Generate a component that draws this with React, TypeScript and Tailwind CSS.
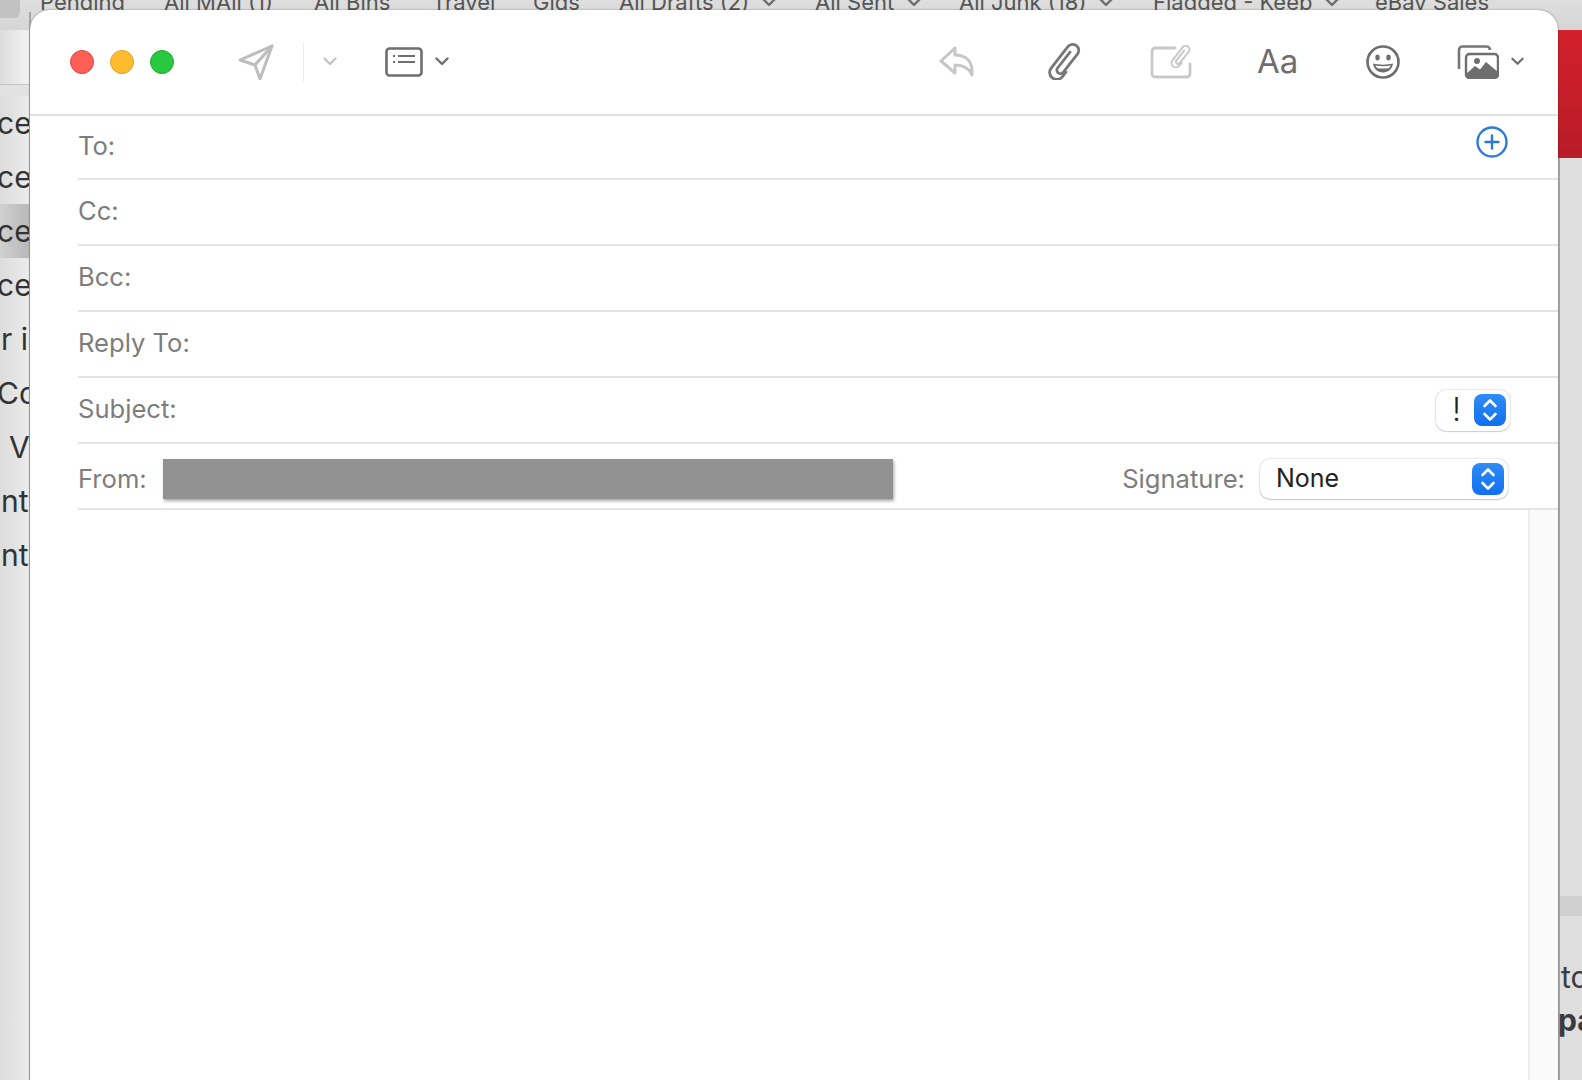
const sans = "font-['Inter','Liberation_Sans',sans-serif]";

const clipPath = "M-1.5 -10V10a3.5 3.5 0 0 0 7 0V-13a6 6 0 0 0-12 0V14a7 7 0 0 0 14 0V8";

function Chevron({ className, color = "#6e6e6e" }: { className?: string; color?: string }) {
  return (
    <svg viewBox="0 0 14 9" className={className} fill="none" stroke={color} strokeWidth="2.4" strokeLinecap="round" strokeLinejoin="round">
      <path d="M1.5 1.5 7 7l5.5-5.5" />
    </svg>
  );
}

function Stepper({ className }: { className: string }) {
  return (
    <div className={`flex items-center justify-center rounded-[8px] bg-gradient-to-b from-[#2f8cf8] to-[#0f6fee] ${className}`}>
      <svg viewBox="0 0 16 26" className="h-[26px] w-[16px]" fill="none" stroke="#fff" strokeWidth="2.6" strokeLinecap="round" strokeLinejoin="round">
        <path d="M2.5 9 8 3.5 13.5 9" />
        <path d="M2.5 17 8 22.500 13.500 17" />
      </svg>
    </div>
  );
}

function HeaderRow({ label, height = "h-[66px]", children }: { label: string; height?: string; children?: React.ReactNode }) {
  return (
    <div className={`flex shrink-0 items-center justify-between border-b-2 border-[#e4e4e4] pb-[2px] ${height}`}>
      <span className="text-[25.6px] text-[#7d7d7d]">{label}</span>
      {children}
    </div>
  );
}

const tabs = [
  { label: "Pending", width: "w-[124px]" },
  { label: "All MAil (1)", width: "w-[150px]" },
  { label: "All Bins", width: "w-[118px]" },
  { label: "Travel", width: "w-[101px]" },
  { label: "Gids", width: "w-[86px]" },
  { label: "All Drafts (2)", width: "w-[196px]", chevron: true },
  { label: "All Sent", width: "w-[144px]", chevron: true },
  { label: "All Junk (18)", width: "w-[194px]", chevron: true },
  { label: "Flagged - Keeb", width: "w-[222px]", chevron: true },
  { label: "eBay Sales", width: "w-[130px]" },
];

const sidebarRows = [
  { text: "cel", className: "-ml-[3px]" },
  { text: "cel", className: "-ml-[3px]" },
  { text: "cel", className: "-ml-[3px]", selected: true },
  { text: "cel", className: "-ml-[3px]" },
  { text: "r is", className: "ml-[1px]" },
  { text: "Co", className: "-ml-[3px]" },
  { text: "V", className: "ml-[9px]" },
  { text: "nte", className: "ml-[1px]" },
  { text: "nte", className: "ml-[1px]" },
];

export default function App() {
  return (
    <div className={`relative h-[1080px] w-[1582px] overflow-hidden bg-[#e2e2e2] ${sans}`}>
      {/* mail window behind the compose sheet */}
      <div className="absolute left-0 top-0 h-[30px] w-full bg-gradient-to-b from-[#dedede] to-[#d6d6d6]" />
      <div className="absolute left-0 top-0 h-[18px] w-[20px] rounded-br-[6px] bg-[#c2c2c2]" />
      <div className="absolute left-[40px] top-[-13px] flex h-[30px] items-center text-[22px] text-[#555]">
        {tabs.map((t) => (
          <div key={t.label} className={`flex items-center gap-[13px] ${t.width}`}>
            <span className="whitespace-nowrap">{t.label}</span>
            {t.chevron && <Chevron className="h-[9px] w-[14px]" />}
          </div>
        ))}
      </div>

      <div className="absolute left-0 top-[30px] h-[55px] w-[30px] border-b border-[#c4c4c4] bg-gradient-to-r from-[#dcdcdc] to-[#f4f4f4]" />
      <div className="absolute left-0 top-[96px] flex w-[30px] flex-col overflow-hidden bg-gradient-to-r from-[#dcdcdc] to-[#ececec] text-[30px] text-[#333]">
        {sidebarRows.map((r, i) => (
          <div key={i} className={`flex h-[54px] items-center whitespace-nowrap ${r.selected ? "bg-gradient-to-r from-[#cfcfcf] to-[#b8b8b8]" : ""}`}>
            <span className={r.className}>{r.text}</span>
          </div>
        ))}
      </div>
      <div className="absolute left-0 top-[582px] h-[498px] w-[30px] bg-gradient-to-r from-[#dcdcdc] to-[#ececec]" />
      <div className="absolute left-[29px] top-[12px] h-[1068px] w-[2px] bg-[#a8a8a8]" />

      <div className="absolute left-[1558px] top-[30px] h-[128px] w-[24px] bg-gradient-to-b from-[#d2202c] to-[#b81c28]" />
      <div className="absolute left-[1558px] top-[158px] h-[922px] w-[24px] border-l-2 border-[#a8a8a8] bg-[#dedede]" />
      <div className="absolute left-[1558px] top-[896px] h-[20px] w-[24px] border-l-2 border-[#a8a8a8] bg-[#cfcfcf]" />
      <div className="absolute left-[1558px] top-[956px] w-[24px] overflow-hidden text-[30px] leading-[43px] text-[#3a3a40]">
        <div className="ml-[3px] whitespace-nowrap">to</div>
        <div className="whitespace-nowrap font-bold">pa</div>
      </div>

      {/* compose window */}
      <div className="absolute left-[30px] top-[10px] flex h-[1090px] w-[1528px] flex-col rounded-t-[20px] bg-white shadow-[0_0_2px_rgba(0,0,0,0.45)]">
        {/* toolbar */}
        <div className="flex h-[106px] shrink-0 items-center border-b-2 border-[#e0e0e0] pb-[1px] pl-[40px]">
          <div className="h-[24px] w-[24px] rounded-full border border-[#e0443e] bg-[#ff5f57]" />
          <div className="ml-[16px] h-[24px] w-[24px] rounded-full border border-[#dea123] bg-[#febc2e]" />
          <div className="ml-[16px] h-[24px] w-[24px] rounded-full border border-[#1fa92e] bg-[#28c840]" />

          <svg viewBox="0 0 36 36" className="ml-[64px] h-[36px] w-[36px]" fill="none" stroke="#bdbdbd" strokeWidth="3" strokeLinejoin="round" strokeLinecap="round">
            <path d="M34 2 2 16l15 5 5 14z" />
            <path d="M34 2 17 21" />
          </svg>
          <div className="ml-[29px] h-[40px] w-[1px] bg-[#ececec]" />
          <Chevron className="ml-[19px] h-[9px] w-[14px]" color="#c4c4c4" />
          <svg viewBox="0 0 38 30" className="ml-[48px] h-[30px] w-[38px]" fill="none" stroke="#6e6e6e">
            <rect x="1.500" y="1.500" width="35" height="27" rx="3" strokeWidth="2.600" />
            <path d="M8 9h2M8 15h2M13 9h17M13 15h17" strokeWidth="2" />
          </svg>
          <Chevron className="ml-[12px] h-[9px] w-[14px]" />

          {/* reply */}
          <svg viewBox="0 0 38 34" className="ml-[489px] h-[34px] w-[38px]" fill="none" stroke="#c6c6c6" strokeWidth="3" strokeLinejoin="round" strokeLinecap="round">
            <path d="M17 3 3 16l14 12v-8c8 0 14 3 17 10 1-13-5-20-17-20z" />
          </svg>
          {/* attach */}
          <svg viewBox="-20 -20 40 40" className="ml-[70px] mb-[2px] h-[38px] w-[38px]" fill="none" stroke="#777" strokeWidth="2.800" strokeLinecap="round" strokeLinejoin="round">
            <g transform="rotate(38) scale(1.06)">
              <path d={clipPath} />
            </g>
          </svg>
          {/* compose with attachment */}
          <svg viewBox="0 0 42 34" className="ml-[66px] h-[34px] w-[42px]" fill="none" stroke="#c8c8c8" strokeLinecap="round" strokeLinejoin="round">
            <path d="M25 3H5a3 3 0 0 0-3 3v23a3 3 0 0 0 3 3h32a3 3 0 0 0 3-3V19" strokeWidth="2.800" />
            <g transform="translate(31 11) rotate(38) scale(0.62)">
              <path d={clipPath} strokeWidth="3.200" />
            </g>
          </svg>
          <span className="ml-[65px] w-[42px] text-[33px] leading-none text-[#6e6e6e]">Aa</span>
          {/* emoji */}
          <svg viewBox="0 0 34 34" className="ml-[67px] h-[34px] w-[34px]" fill="none">
            <circle cx="17" cy="17" r="15.500" stroke="#6e6e6e" strokeWidth="2.600" />
            <ellipse cx="11.500" cy="12.500" rx="2.200" ry="3" fill="#6e6e6e" />
            <ellipse cx="22.500" cy="12.500" rx="2.200" ry="3" fill="#6e6e6e" />
            <path d="M7 18.500c6 1.500 14 1.500 20 0-.5 5-4.500 9-10 9s-9.500-4-10-9z" fill="#6e6e6e" />
            <path d="M9.500 20.500c5 1 10 1 15 0-.5 1.500-1 2-1.500 2.500-4 .7-8 .7-12 0-.5-.5-1-1-1.500-2.500z" fill="#fff" />
          </svg>
          {/* photos */}
          <svg viewBox="0 0 42 34" className="ml-[57px] h-[34px] w-[42px]" fill="none">
            <path d="M2 24V5a3.500 3.500 0 0 1 3.500-3.500h24A3.500 3.500 0 0 1 33 5" stroke="#777" strokeWidth="2.600" />
            <rect x="9" y="9" width="32" height="24" rx="3.500" fill="#fff" stroke="#6e6e6e" strokeWidth="2.400" />
            <circle cx="20" cy="16" r="3" fill="#6e6e6e" />
            <path d="M9 29l9-8 5 3.500 6-7.500 12 10v3a3.500 3.500 0 0 1-3.500 3.500h-25A3.500 3.500 0 0 1 9 30z" fill="#6e6e6e" />
          </svg>
          <Chevron className="ml-[12px] h-[9px] w-[13px]" />
        </div>

        {/* address fields */}
        <div className="flex shrink-0 flex-col pl-[48px]">
          <HeaderRow label="To:" height="h-[64px]">
            <svg viewBox="0 0 32 32" className="mb-[8px] mr-[50px] h-[32px] w-[32px]" fill="none" stroke="#2a79d8" strokeWidth="2.400" strokeLinecap="round">
              <circle cx="16" cy="16" r="14.500" />
              <path d="M16 9.500v13M9.500 16h13" />
            </svg>
          </HeaderRow>
          <HeaderRow label="Cc:" />
          <HeaderRow label="Bcc:" />
          <HeaderRow label="Reply To:" />
          <HeaderRow label="Subject:">
            <div className="mr-[48px] mt-[2px] flex h-[41px] w-[74px] items-center justify-between rounded-[10px] bg-white pl-[16px] pr-[4px] shadow-[0_0_2px_rgba(0,0,0,0.3),0_1px_1px_rgba(0,0,0,0.12)]">
              <span className="text-[32px] font-light leading-none text-[#222]">!</span>
              <Stepper className="h-[32px] w-[32px]" />
            </div>
          </HeaderRow>
          <div className="flex h-[66px] shrink-0 items-center border-b-2 border-[#e4e4e4] pt-[6px]">
            <span className="text-[25.6px] text-[#7d7d7d]">From:</span>
            <div className="ml-[16px] h-[40px] w-[730px] bg-[#929292] shadow-[1px_2px_3px_rgba(0,0,0,0.35)]" />
            <span className="ml-auto text-[25.6px] text-[#7d7d7d]">Signature:</span>
            <div className="ml-[15px] mr-[50px] flex h-[40px] w-[248px] items-center justify-between rounded-[10px] bg-white pl-[16px] pr-[4px] shadow-[0_0_2px_rgba(0,0,0,0.3),0_1px_1px_rgba(0,0,0,0.15)]">
              <span className="text-[25px] text-[#222]">None</span>
              <Stepper className="h-[32px] w-[32px]" />
            </div>
          </div>
        </div>

        {/* message body */}
        <div className="flex min-h-0 flex-1 justify-end">
          <div className="w-[30px] border-l-2 border-[#ececec] bg-[#fafafa]" />
        </div>
      </div>
    </div>
  );
}
